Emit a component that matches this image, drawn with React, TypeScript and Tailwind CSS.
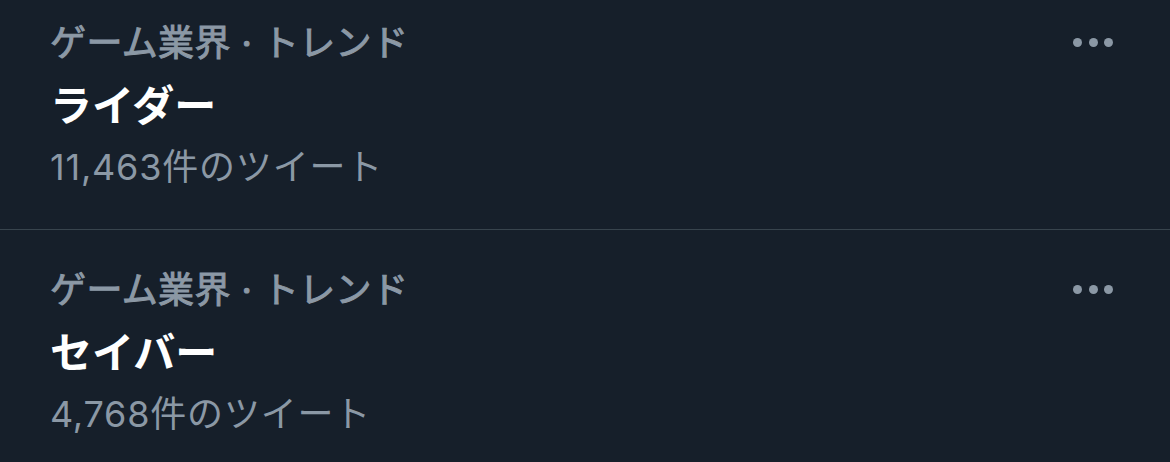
interface Trend {
    id: string
    category: string
    title: string
    count: string
}

const trends: Trend[] = [
    { id: 'rider', category: 'ゲーム業界 · トレンド', title: 'ライダー', count: '11,463件のツイート' },
    { id: 'saber', category: 'ゲーム業界 · トレンド', title: 'セイバー', count: '4,768件のツイート' },
]

const font = { fontFamily: 'Inter, "Noto Sans CJK JP", sans-serif' }

function Dots() {
    return (
        <div className="flex items-center gap-[6.5px] pt-[26px]">
            <span className="h-[9px] w-[9px] rounded-full bg-[#8b98a5]" />
            <span className="h-[9px] w-[9px] rounded-full bg-[#8b98a5]" />
            <span className="h-[9px] w-[9px] rounded-full bg-[#8b98a5]" />
        </div>
    )
}

export default function App() {
    return (
        <div className="w-[1170px] h-[462px] overflow-hidden bg-[#161f2a]" style={font}>
            {trends.map((trend, i) => (
                <div
                    key={trend.id}
                    className={`flex items-start justify-between pl-[50px] pr-[57px] pb-[31px] ${i === 0 ? 'pt-[12px] border-b border-[#38444d]' : 'pt-[29px]'}`}
                >
                    <div className="flex flex-col">
                        <div className="h-[62px] flex items-center text-[36px] tracking-[0.4px] text-[#8b98a5] [-webkit-text-stroke:1px_#8b98a5]">
                            {trend.category}
                        </div>
                        <div className="h-[62px] flex items-center text-[42px] font-bold text-white">
                            {trend.title}
                        </div>
                        <div className="h-[62px] flex items-center text-[36px] tracking-[0.8px] text-[#8b98a5]">
                            {trend.count}
                        </div>
                    </div>
                    <Dots />
                </div>
            ))}
        </div>
    )
}
